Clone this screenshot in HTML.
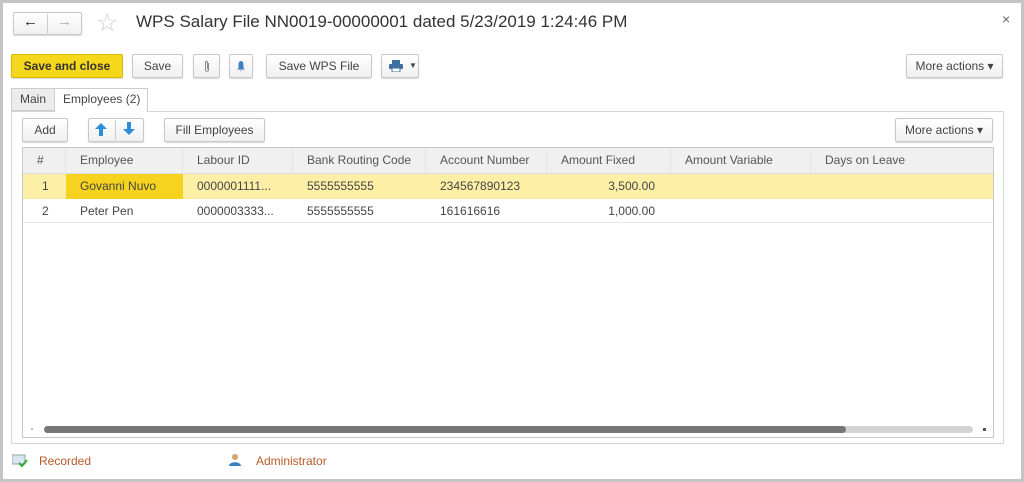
<!DOCTYPE html>
<html><head><meta charset="utf-8"><style>
*{box-sizing:border-box;margin:0;padding:0}
body{width:1024px;height:482px;background:#fff;font-family:"Liberation Sans",Arial,sans-serif;font-size:12px;color:#444;position:relative;overflow:hidden}
.frame{position:absolute;left:0;top:0;width:1024px;height:482px;border:3px solid #c4c4c4}
.a{position:absolute}
.btn{position:absolute;height:24px;border:1px solid #c8c8c8;border-radius:2px;background:linear-gradient(#fff,#f0f0f0);box-shadow:0 1px 1px rgba(0,0,0,.15);text-align:center;line-height:22px;color:#444;font-size:12px}
.th{position:absolute;top:0;height:26px;line-height:24px;border-right:1px solid #e4e4e4;padding-left:14px;color:#555}
.td{position:absolute;height:24px;line-height:24px;padding-left:14px;color:#444}
</style></head><body>
<div class="frame"></div>
<div class="btn" style="left:13px;top:12px;width:69px;height:23px"></div>
<div class="a" style="left:47px;top:14px;width:1px;height:19px;background:#ccc"></div>
<div class="a" style="left:23px;top:13px;font-size:15px;color:#222;font-weight:bold">&#8592;</div>
<div class="a" style="left:57px;top:13px;font-size:15px;color:#aaa">&#8594;</div>
<div class="a" style="left:96px;top:8px;font-size:25px;color:#ccc">&#9734;</div>
<div class="a" style="left:136px;top:12px;font-size:17px;color:#333">WPS Salary File NN0019-00000001 dated 5/23/2019 1:24:46 PM</div>
<div class="a" style="left:1002px;top:11px;font-size:14px;color:#666">×</div>

<div class="btn" style="left:11px;top:54px;width:112px;background:#f5d81b;border-color:#d9b800;font-weight:bold;color:#333">Save and close</div>
<div class="btn" style="left:132px;top:54px;width:51px">Save</div>
<div class="btn" style="left:193px;top:54px;width:27px"><svg width="8" height="13" viewBox="0 0 8 13" style="margin-top:5px"><path d="M5.5 3V10C5.5 11.5 2.5 11.5 2.5 10V2.5C2.5 1 4.5 1 4.5 2.5V9" stroke="#888" stroke-width="1" fill="none"/></svg></div>
<div class="btn" style="left:229px;top:54px;width:24px"><svg width="12" height="12" viewBox="0 0 12 12" style="margin-top:5px"><path d="M6 1C4 1 3.5 3 3.5 5V8L2 9.5H10L8.5 8V5C8.5 3 8 1 6 1ZM5 10.5H7L6 11.5Z" fill="#3f7fc0"/></svg></div>
<div class="btn" style="left:266px;top:54px;width:106px">Save WPS File</div>
<div class="btn" style="left:381px;top:54px;width:38px"><svg width="14" height="12" viewBox="0 0 14 12" style="margin:5px 0 0 -8px"><rect x="3" y="0" width="8" height="4" fill="#3f6fa0"/><rect x="0" y="4" width="14" height="5" rx="1" fill="#3f6fa0"/><rect x="3" y="8" width="8" height="4" fill="#fff" stroke="#3f6fa0"/></svg><span style="position:absolute;left:27px;top:0;font-size:8px">&#9660;</span></div>
<div class="btn" style="left:906px;top:54px;width:97px">More actions &#9662;</div>

<div class="a" style="left:11px;top:88px;width:44px;height:23px;border:1px solid #ccc;background:#ececec;line-height:21px;padding-left:8px">Main</div>
<div class="a" style="left:54px;top:88px;width:94px;height:24px;border:1px solid #ccc;border-bottom:none;background:#fff;line-height:21px;padding-left:8px;z-index:2">Employees (2)</div>
<div class="a" style="left:11px;top:111px;width:993px;height:333px;border:1px solid #d4d4d4"></div>

<div class="btn" style="left:22px;top:118px;width:46px">Add</div>
<div class="btn" style="left:88px;top:118px;width:56px"></div>
<div class="a" style="left:115px;top:120px;width:1px;height:20px;background:#ccc"></div>
<svg class="a" style="left:95px;top:123px" width="12" height="13"><path d="M6 0L12 6H8V13H4V6H0Z" fill="#2e8fd8"/></svg>
<svg class="a" style="left:123px;top:122px" width="12" height="13"><path d="M6 13L12 7H8V0H4V7H0Z" fill="#2e8fd8"/></svg>
<div class="btn" style="left:164px;top:118px;width:101px">Fill Employees</div>
<div class="btn" style="left:895px;top:118px;width:98px">More actions &#9662;</div>

<div class="a" style="left:22px;top:147px;width:972px;height:291px;border:1px solid #c8c8c8;overflow:hidden">
 <div class="a" style="left:0;top:0;width:972px;height:26px;background:#f0f0f0;border-bottom:1px solid #ddd"></div>
 <div class="th" style="left:0;width:43px;padding-left:14px">#</div>
 <div class="th" style="left:43px;width:117px">Employee</div>
 <div class="th" style="left:160px;width:110px">Labour ID</div>
 <div class="th" style="left:270px;width:133px">Bank Routing Code</div>
 <div class="th" style="left:403px;width:121px">Account Number</div>
 <div class="th" style="left:524px;width:124px">Amount Fixed</div>
 <div class="th" style="left:648px;width:140px">Amount Variable</div>
 <div class="th" style="left:788px;width:184px;border:none">Days on Leave</div>
 <div class="a" style="left:0;top:26px;width:972px;height:25px;background:#fdf0a6;border-bottom:1px solid #f5e7a0"></div>
 <div class="a" style="left:43px;top:26px;width:117px;height:25px;background:#f6d31e"></div>
 <div class="a" style="left:0;top:51px;width:972px;height:24px;border-bottom:1px solid #e8e8e8"></div>
 <div class="td" style="left:5px;top:26px">1</div>
 <div class="td" style="left:43px;top:26px">Govanni Nuvo</div>
 <div class="td" style="left:160px;top:26px">0000001111...</div>
 <div class="td" style="left:270px;top:26px">5555555555</div>
 <div class="td" style="left:403px;top:26px">234567890123</div>
 <div class="td" style="left:524px;top:26px;width:108px;text-align:right">3,500.00</div>
 <div class="td" style="left:5px;top:51px">2</div>
 <div class="td" style="left:43px;top:51px">Peter Pen</div>
 <div class="td" style="left:160px;top:51px">0000003333...</div>
 <div class="td" style="left:270px;top:51px">5555555555</div>
 <div class="td" style="left:403px;top:51px">161616616</div>
 <div class="td" style="left:524px;top:51px;width:108px;text-align:right">1,000.00</div>
 <div class="a" style="left:21px;top:278px;width:929px;height:7px;border-radius:4px;background:#d4d4d4"></div>
 <div class="a" style="left:21px;top:278px;width:802px;height:7px;border-radius:4px;background:#777"></div>
 <div class="a" style="left:8px;top:280px;width:2px;height:2px;background:#bbb"></div>
 <div class="a" style="left:960px;top:280px;width:3px;height:3px;background:#555"></div>
</div>

<svg class="a" style="left:12px;top:454px" width="16" height="14"><rect x="0" y="1" width="13" height="9" fill="#d8e4ee" stroke="#8aa"/><path d="M7 9L10 12L15 6" stroke="#3a3" stroke-width="2" fill="none"/></svg>
<div class="a" style="left:39px;top:454px;color:#b75a28;font-size:12px">Recorded</div>
<svg class="a" style="left:229px;top:453px" width="12" height="14"><circle cx="6" cy="4" r="3" fill="#d9a070"/><path d="M0 13C0 8 12 8 12 13Z" fill="#3a7fc0"/></svg>
<div class="a" style="left:256px;top:454px;color:#b75a28;font-size:12px">Administrator</div>
</body></html>
